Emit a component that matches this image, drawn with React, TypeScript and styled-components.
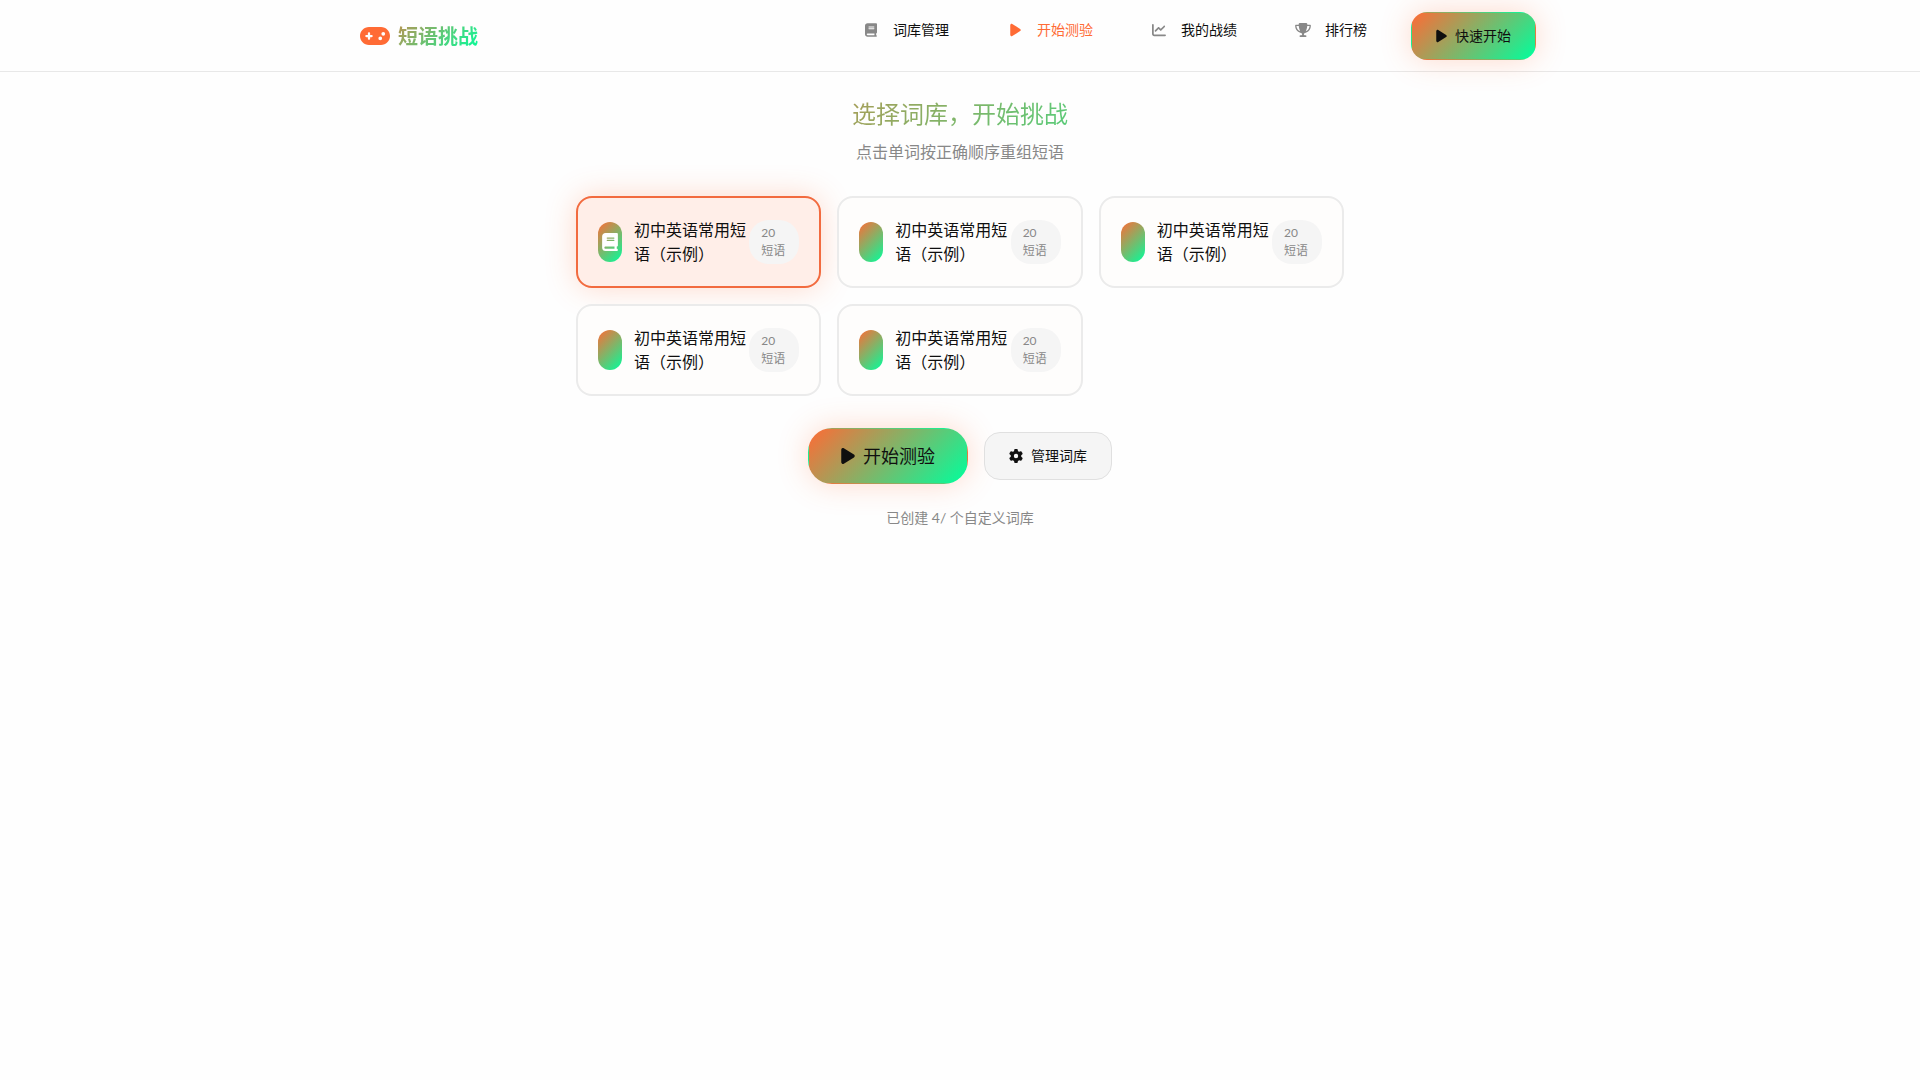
import React, { useState } from 'react';
import styled, { createGlobalStyle, css } from 'styled-components';
import { FaBook, FaChartLine, FaGamepad, FaGear, FaPlay, FaTrophy } from 'react-icons/fa6';

const brandGradient = 'linear-gradient(135deg, #ff6b35 0%, #00ff9d 100%)';
const glow = '0 0 30px rgba(255, 107, 53, 0.25)';
const ink = '#0f0f0f';
const muted = '#888888';
const accent = '#ff6b35';

const GlobalStyle = createGlobalStyle`
  *, *::before, *::after { box-sizing: border-box; }
  body {
    margin: 0;
    background: #fefefe;
    color: ${ink};
    font-family: Lato, "Noto Sans CJK SC", sans-serif;
    font-size: 16px;
    line-height: 24px;
  }
  button { font-family: inherit; color: inherit; cursor: pointer; }
  h1, p { margin: 0; padding: 0; }
`;

const Header = styled.header`
  border-bottom: 1px solid #e8e8e8;
`;

const HeaderInner = styled.div`
  display: flex;
  align-items: center;
  justify-content: space-between;
  max-width: 1200px;
  margin: 0 auto;
  padding: 12px 24px 11px 0;
`;

const Logo = styled.a`
  display: flex;
  align-items: center;
  gap: 8px;
  font-size: 20px;
  font-weight: 700;
  line-height: 32px;
  text-decoration: none;
  color: transparent;
  background: ${brandGradient};
  background-clip: text;
`;

const Icon = styled.span<{ $w: number; $h: number; $color?: string }>`
  display: flex;
  flex: none;
  color: ${(p) => p.$color ?? 'inherit'};
  svg {
    width: ${(p) => p.$w}px;
    height: ${(p) => p.$h}px;
  }
`;

const HeaderRight = styled.div`
  display: flex;
  gap: 24px;
`;

const Nav = styled.nav`
  display: flex;
  align-items: flex-start;
  gap: 16px;
`;

const NavLink = styled.a<{ $active?: boolean }>`
  display: flex;
  align-items: center;
  gap: 12px;
  padding: 8px 20px;
  border-radius: 12px;
  font-size: 14px;
  line-height: 20px;
  text-decoration: none;
  color: ${(p) => (p.$active ? accent : ink)};
`;

const NavIcon = styled(Icon)`
  width: 20px;
  justify-content: center;
`;

const Button = styled.button<{ $primary?: boolean; $large?: boolean }>`
  display: flex;
  align-items: center;
  justify-content: center;
  gap: 8px;
  height: 48px;
  padding: 0 24px;
  border: 1px solid #e0e0e0;
  border-radius: 16px;
  background: #f5f5f5;
  font-size: 14px;
  line-height: 20px;
  ${(p) =>
    p.$primary &&
    css`
      border-color: transparent;
      background: ${brandGradient};
      box-shadow: ${glow};
    `}
  ${(p) =>
    p.$large &&
    css`
      height: 56px;
      padding: 0 32px;
      border-radius: 24px;
      font-size: 18px;
      line-height: 28px;
    `}
`;

const Main = styled.main`
  max-width: 768px;
  margin: 0 auto;
  padding: 24px 0;
  text-align: center;
`;

const Title = styled.h1`
  font-size: 24px;
  font-weight: 400;
  line-height: 36px;
  color: transparent;
  background: ${brandGradient};
  background-clip: text;
`;

const Subtitle = styled.p`
  margin-top: 8px;
  color: ${muted};
`;

const CardGrid = styled.div`
  display: grid;
  grid-template-columns: repeat(3, minmax(0, 1fr));
  gap: 16px;
  margin-top: 32px;
`;

const Card = styled.button<{ $selected: boolean }>`
  display: flex;
  align-items: center;
  padding: 20px;
  border: 2px solid ${(p) => (p.$selected ? '#f26b3f' : '#ebebeb')};
  border-radius: 16px;
  background: ${(p) => (p.$selected ? '#ffeee8' : '#fefdfc')};
  box-shadow: ${(p) => (p.$selected ? glow : 'none')};
  font-size: 16px;
  line-height: 24px;
  text-align: left;
`;

const CardIcon = styled.span`
  display: flex;
  flex: none;
  align-items: center;
  justify-content: center;
  width: 24px;
  height: 40px;
  margin-right: 12px;
  border-radius: 12px;
  background: ${brandGradient};
  color: #ffffff;
`;

const CardName = styled.span`
  flex: 1;
  min-width: 0;
`;

const Badge = styled.span`
  display: flex;
  flex: none;
  flex-direction: column;
  width: 50px;
  margin: 2px 0;
  padding: 4px 12px;
  border-radius: 20px;
  background: #f5f5f5;
  color: ${muted};
  font-size: 12px;
  line-height: 18px;
`;

const Actions = styled.div`
  display: flex;
  align-items: center;
  justify-content: center;
  gap: 16px;
  margin-top: 32px;
`;

const Note = styled.p`
  margin-top: 24px;
  color: ${muted};
  font-size: 14px;
  line-height: 20px;
`;

const navItems = [
  { label: '词库管理', icon: <FaBook />, width: 12 },
  { label: '开始测验', icon: <FaPlay />, width: 11, active: true },
  { label: '我的战绩', icon: <FaChartLine />, width: 14 },
  { label: '排行榜', icon: <FaTrophy />, width: 16 },
];

const banks = [1, 2, 3, 4, 5].map((id) => ({
  id,
  name: '初中英语常用短语（示例）',
  count: 20,
  hasIcon: id === 1,
}));

export default function App() {
  const [selected, setSelected] = useState(1);

  return (
    <>
      <GlobalStyle />
      <Header>
        <HeaderInner>
          <Logo href="#">
            <Icon $w={30} $h={24} $color={accent}><FaGamepad /></Icon>
            短语挑战
          </Logo>
          <HeaderRight>
            <Nav>
              {navItems.map((item) => (
                <NavLink key={item.label} href="#" $active={item.active}>
                  <NavIcon $w={item.width} $h={14} $color={item.active ? accent : muted}>
                    {item.icon}
                  </NavIcon>
                  {item.label}
                </NavLink>
              ))}
            </Nav>
            <Button type="button" $primary>
              <Icon $w={11} $h={14}><FaPlay /></Icon>
              快速开始
            </Button>
          </HeaderRight>
        </HeaderInner>
      </Header>
      <Main>
        <Title>选择词库，开始挑战</Title>
        <Subtitle>点击单词按正确顺序重组短语</Subtitle>
        <CardGrid>
          {banks.map((bank) => (
            <Card
              key={bank.id}
              type="button"
              $selected={bank.id === selected}
              aria-pressed={bank.id === selected}
              onClick={() => setSelected(bank.id)}
            >
              <CardIcon>
                {bank.hasIcon && <Icon $w={16} $h={18}><FaBook /></Icon>}
              </CardIcon>
              <CardName>{bank.name}</CardName>
              <Badge>
                <span>{bank.count}</span>
                <span>短语</span>
              </Badge>
            </Card>
          ))}
        </CardGrid>
        <Actions>
          <Button type="button" $primary $large>
            <Icon $w={14} $h={18}><FaPlay /></Icon>
            开始测验
          </Button>
          <Button type="button">
            <Icon $w={14} $h={14}><FaGear /></Icon>
            管理词库
          </Button>
        </Actions>
        <Note>已创建 4/ 个自定义词库</Note>
      </Main>
    </>
  );
}
